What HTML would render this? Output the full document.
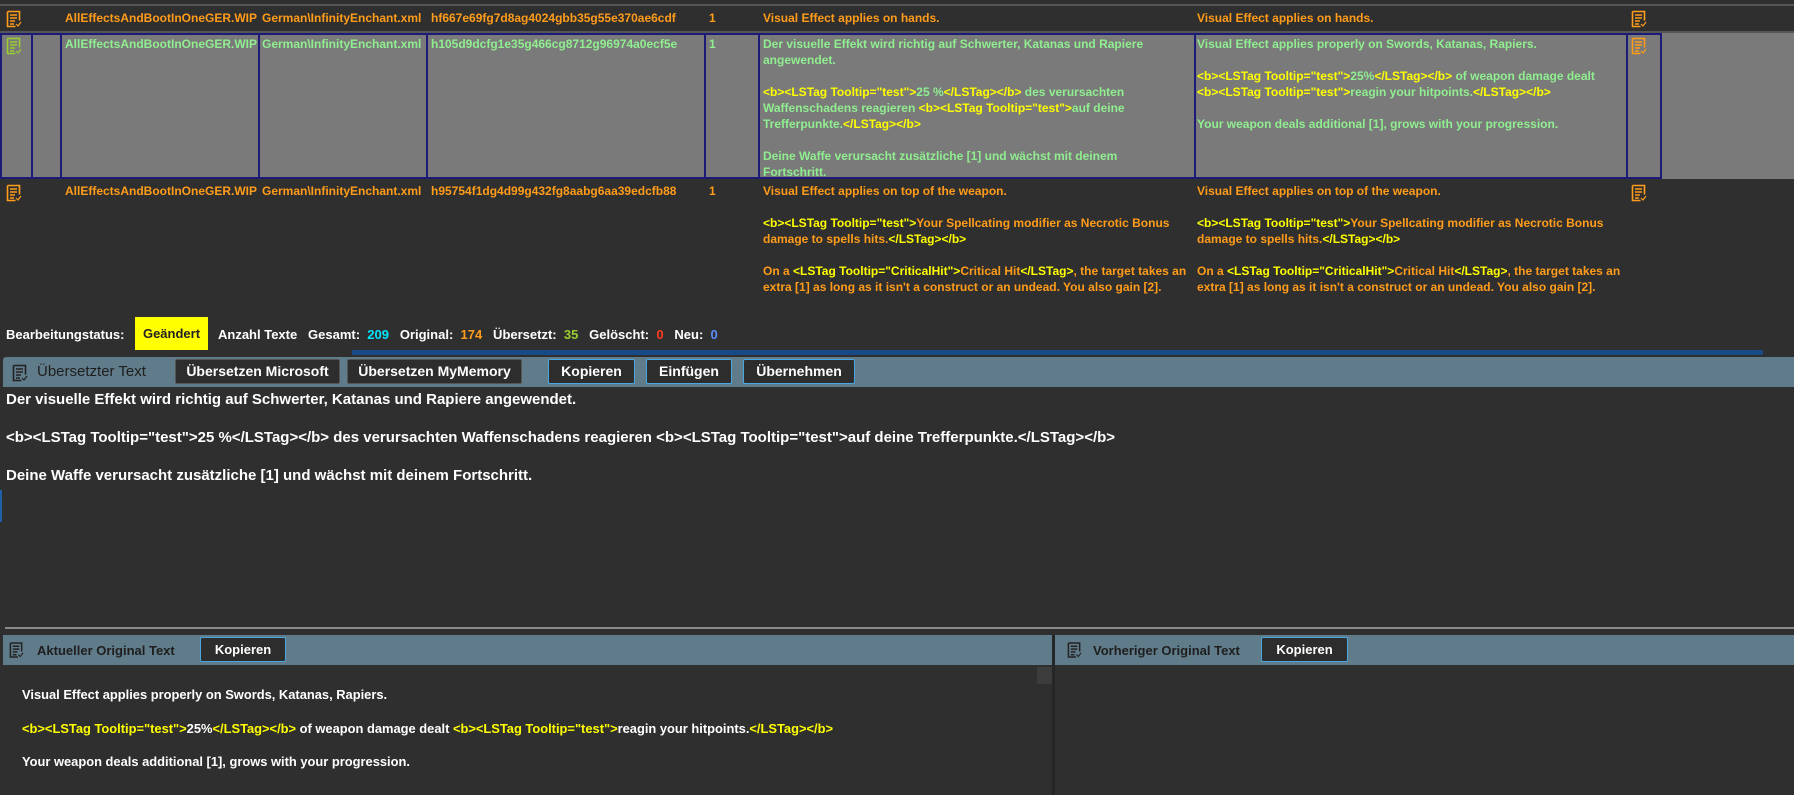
<!DOCTYPE html>
<html><head><meta charset="utf-8"><style>
*{margin:0;padding:0;box-sizing:border-box}
body{width:1794px;height:795px;background:#2f2f2f;position:relative;overflow:hidden;font-family:"Liberation Sans",sans-serif;font-weight:bold;}
.a{position:absolute;white-space:nowrap}
.o{color:#ff9c1a}.g{color:#90ee90}.y{color:#ffff00}.w{color:#fff}
.t{font-size:12px;line-height:16px}
.vl{position:absolute;width:2px;background:#1c1c78}
.btn{position:absolute;top:359px;height:25px;background:#2d2d2d;border:1px solid #4aa6de;color:#fff;font-size:14px;line-height:23px;text-align:center;border-radius:2px}
.btn.gr{border-color:#555}
.hdr{position:absolute;background:#607b89}
</style></head><body>
<svg width="0" height="0" style="position:absolute"><defs>
<symbol id="doc" viewBox="0 0 16 18"><path d="M1.5 1.5h12v9M1.5 1.5v15h8M4 5h7M4 8h7M4 11h5M4 14h4" fill="none" stroke="currentColor" stroke-width="1.6"/><path d="M10 14l2 2 3-4" fill="none" stroke="currentColor" stroke-width="1.2"/></symbol>
</defs></svg>
<div class="a" style="left:0;top:4px;width:1794px;height:2px;background:#555"></div>
<!-- row 1 -->
<div class="a" style="left:0;top:31px;width:1794px;height:2px;background:#555"></div>
<svg class="a o" style="left:6px;top:10px" width="16" height="18"><use href="#doc"/></svg>
<div class="a t o" style="left:65px;top:10px">AllEffectsAndBootInOneGER.WIP</div>
<div class="a t o" style="left:262px;top:10px">German\InfinityEnchant.xml</div>
<div class="a t o" style="left:431px;top:10px">hf667e69fg7d8ag4024gbb35g55e370ae6cdf</div>
<div class="a t o" style="left:709px;top:10px">1</div>
<div class="a t o" style="left:763px;top:10px">Visual Effect applies on hands.</div>
<div class="a t o" style="left:1197px;top:10px">Visual Effect applies on hands.</div>
<svg class="a o" style="left:1631px;top:10px" width="16" height="18"><use href="#doc"/></svg>
<!-- row 2 -->
<div class="a" style="left:0;top:33px;width:1794px;height:146px;background:#7a7a7a"></div>
<div class="a" style="left:0;top:33px;width:1662px;height:146px;border:2px solid #1c1c78"></div>
<div class="vl" style="left:31px;top:33px;height:146px"></div>
<div class="vl" style="left:60px;top:33px;height:146px"></div>
<div class="vl" style="left:258px;top:33px;height:146px"></div>
<div class="vl" style="left:426px;top:33px;height:146px"></div>
<div class="vl" style="left:704px;top:33px;height:146px"></div>
<div class="vl" style="left:758px;top:33px;height:146px"></div>
<div class="vl" style="left:1194px;top:33px;height:146px"></div>
<div class="vl" style="left:1626px;top:33px;height:146px"></div>
<div class="vl" style="left:1660px;top:33px;height:146px"></div>
<svg class="a" style="left:6px;top:37px;color:#9acd32" width="16" height="18"><use href="#doc"/></svg>
<div class="a t g" style="left:65px;top:36px">AllEffectsAndBootInOneGER.WIP</div>
<div class="a t g" style="left:262px;top:36px">German\InfinityEnchant.xml</div>
<div class="a t g" style="left:431px;top:36px">h105d9dcfg1e35g466cg8712g96974a0ecf5e</div>
<div class="a t g" style="left:709px;top:36px">1</div>
<div class="a t g" style="left:763px;top:36px">Der visuelle Effekt wird richtig auf Schwerter, Katanas und Rapiere<br>angewendet.<br><br><span class="y">&lt;b&gt;&lt;LSTag Tooltip="test"&gt;</span>25 %<span class="y">&lt;/LSTag&gt;&lt;/b&gt;</span> des verursachten<br>Waffenschadens reagieren <span class="y">&lt;b&gt;&lt;LSTag Tooltip="test"&gt;</span>auf deine<br>Trefferpunkte.<span class="y">&lt;/LSTag&gt;&lt;/b&gt;</span><br><br>Deine Waffe verursacht zusätzliche [1] und wächst mit deinem<br>Fortschritt.</div>
<div class="a t g" style="left:1197px;top:36px">Visual Effect applies properly on Swords, Katanas, Rapiers.<br><br><span class="y">&lt;b&gt;&lt;LSTag Tooltip="test"&gt;</span>25%<span class="y">&lt;/LSTag&gt;&lt;/b&gt;</span> of weapon damage dealt<br><span class="y">&lt;b&gt;&lt;LSTag Tooltip="test"&gt;</span>reagin your hitpoints.<span class="y">&lt;/LSTag&gt;&lt;/b&gt;</span><br><br>Your weapon deals additional [1], grows with your progression.</div>
<svg class="a o" style="left:1631px;top:37px" width="16" height="18"><use href="#doc"/></svg>
<!-- row 3 -->
<svg class="a o" style="left:6px;top:184px" width="16" height="18"><use href="#doc"/></svg>
<div class="a t o" style="left:65px;top:183px">AllEffectsAndBootInOneGER.WIP</div>
<div class="a t o" style="left:262px;top:183px">German\InfinityEnchant.xml</div>
<div class="a t o" style="left:431px;top:183px">h95754f1dg4d99g432fg8aabg6aa39edcfb88</div>
<div class="a t o" style="left:709px;top:183px">1</div>
<div class="a t o" style="left:763px;top:183px">Visual Effect applies on top of the weapon.<br><br><span class="y">&lt;b&gt;&lt;LSTag Tooltip="test"&gt;</span>Your Spellcating modifier as Necrotic Bonus<br>damage to spells hits.<span class="y">&lt;/LSTag&gt;&lt;/b&gt;</span><br><br>On a <span class="y">&lt;LSTag Tooltip="CriticalHit"&gt;</span>Critical Hit<span class="y">&lt;/LSTag&gt;</span>, the target takes an<br>extra [1] as long as it isn't a construct or an undead. You also gain [2].</div>
<div class="a t o" style="left:1197px;top:183px">Visual Effect applies on top of the weapon.<br><br><span class="y">&lt;b&gt;&lt;LSTag Tooltip="test"&gt;</span>Your Spellcating modifier as Necrotic Bonus<br>damage to spells hits.<span class="y">&lt;/LSTag&gt;&lt;/b&gt;</span><br><br>On a <span class="y">&lt;LSTag Tooltip="CriticalHit"&gt;</span>Critical Hit<span class="y">&lt;/LSTag&gt;</span>, the target takes an<br>extra [1] as long as it isn't a construct or an undead. You also gain [2].</div>
<svg class="a o" style="left:1631px;top:184px" width="16" height="18"><use href="#doc"/></svg>
<!-- status -->
<div class="a w" style="left:6px;top:327px;font-size:13px">Bearbeitungstatus:</div>
<div class="a" style="left:135px;top:317px;width:73px;height:33px;background:#ffff00;color:#222;font-size:13px;line-height:33px;text-align:center">Geändert</div>
<div class="a w" style="left:218px;top:327px;font-size:13px">Anzahl Texte&nbsp;&nbsp; Gesamt:&nbsp; <span style="color:#00e5ff">209</span>&nbsp;&nbsp; Original:&nbsp; <span class="o">174</span>&nbsp;&nbsp; Übersetzt:&nbsp; <span style="color:#9acd32">35</span>&nbsp;&nbsp; Gelöscht:&nbsp; <span style="color:#ff3b1f">0</span>&nbsp;&nbsp; Neu:&nbsp; <span style="color:#5b8cff">0</span></div>
<div class="a" style="left:352px;top:350px;width:1411px;height:5px;background:#174a86"></div>
<!-- toolbar -->
<div class="hdr" style="left:3px;top:357px;width:1791px;height:30px;border-radius:3px 0 0 0"></div>
<svg class="a" style="left:12px;top:364px;color:#222" width="16" height="18"><use href="#doc"/></svg>
<div class="a" style="left:37px;top:363px;font-size:15px;font-weight:normal;color:#1e1e1e">Übersetzter Text</div>
<div class="btn gr" style="left:175px;width:165px">Übersetzen Microsoft</div>
<div class="btn gr" style="left:347px;width:175px">Übersetzen MyMemory</div>
<div class="btn" style="left:548px;width:87px">Kopieren</div>
<div class="btn" style="left:646px;width:86px">Einfügen</div>
<div class="btn" style="left:743px;width:112px">Übernehmen</div>
<div class="a w" style="left:6px;top:381px;font-size:15px;line-height:38px">Der visuelle Effekt wird richtig auf Schwerter, Katanas und Rapiere angewendet.<br>&lt;b&gt;&lt;LSTag Tooltip="test"&gt;25 %&lt;/LSTag&gt;&lt;/b&gt; des verursachten Waffenschadens reagieren &lt;b&gt;&lt;LSTag Tooltip="test"&gt;auf deine Trefferpunkte.&lt;/LSTag&gt;&lt;/b&gt;<br>Deine Waffe verursacht zusätzliche [1] und wächst mit deinem Fortschritt.</div>
<div class="a" style="left:0;top:490px;width:2px;height:32px;background:#1e5fa8"></div>
<div class="a" style="left:5px;top:627px;width:1789px;height:2px;background:#8a8a8a"></div>
<!-- lower panels -->
<div class="hdr" style="left:3px;top:635px;width:1049px;height:30px"></div>
<div class="hdr" style="left:1055px;top:635px;width:739px;height:30px"></div>
<div class="a" style="left:1052px;top:635px;width:3px;height:160px;background:#262626"></div>
<svg class="a" style="left:9px;top:641px;color:#222" width="15" height="18"><use href="#doc"/></svg>
<div class="a" style="left:37px;top:643px;font-size:13px;color:#1e1e1e">Aktueller Original Text</div>
<div class="btn" style="left:200px;top:637px;width:86px;height:25px;font-size:13px">Kopieren</div>
<svg class="a" style="left:1067px;top:641px;color:#222" width="15" height="18"><use href="#doc"/></svg>
<div class="a" style="left:1093px;top:643px;font-size:13px;color:#1e1e1e">Vorheriger Original Text</div>
<div class="btn" style="left:1261px;top:637px;width:87px;height:25px;font-size:13px">Kopieren</div>
<div class="a" style="left:1037px;top:667px;width:15px;height:17px;background:#3c3c3c"></div>
<div class="a w" style="left:22px;top:678px;font-size:12.9px;line-height:33.5px">Visual Effect applies properly on Swords, Katanas, Rapiers.<br><span class="y">&lt;b&gt;&lt;LSTag Tooltip="test"&gt;</span>25%<span class="y">&lt;/LSTag&gt;&lt;/b&gt;</span> of weapon damage dealt <span class="y">&lt;b&gt;&lt;LSTag Tooltip="test"&gt;</span>reagin your hitpoints.<span class="y">&lt;/LSTag&gt;&lt;/b&gt;</span><br>Your weapon deals additional [1], grows with your progression.</div>
</body></html>
